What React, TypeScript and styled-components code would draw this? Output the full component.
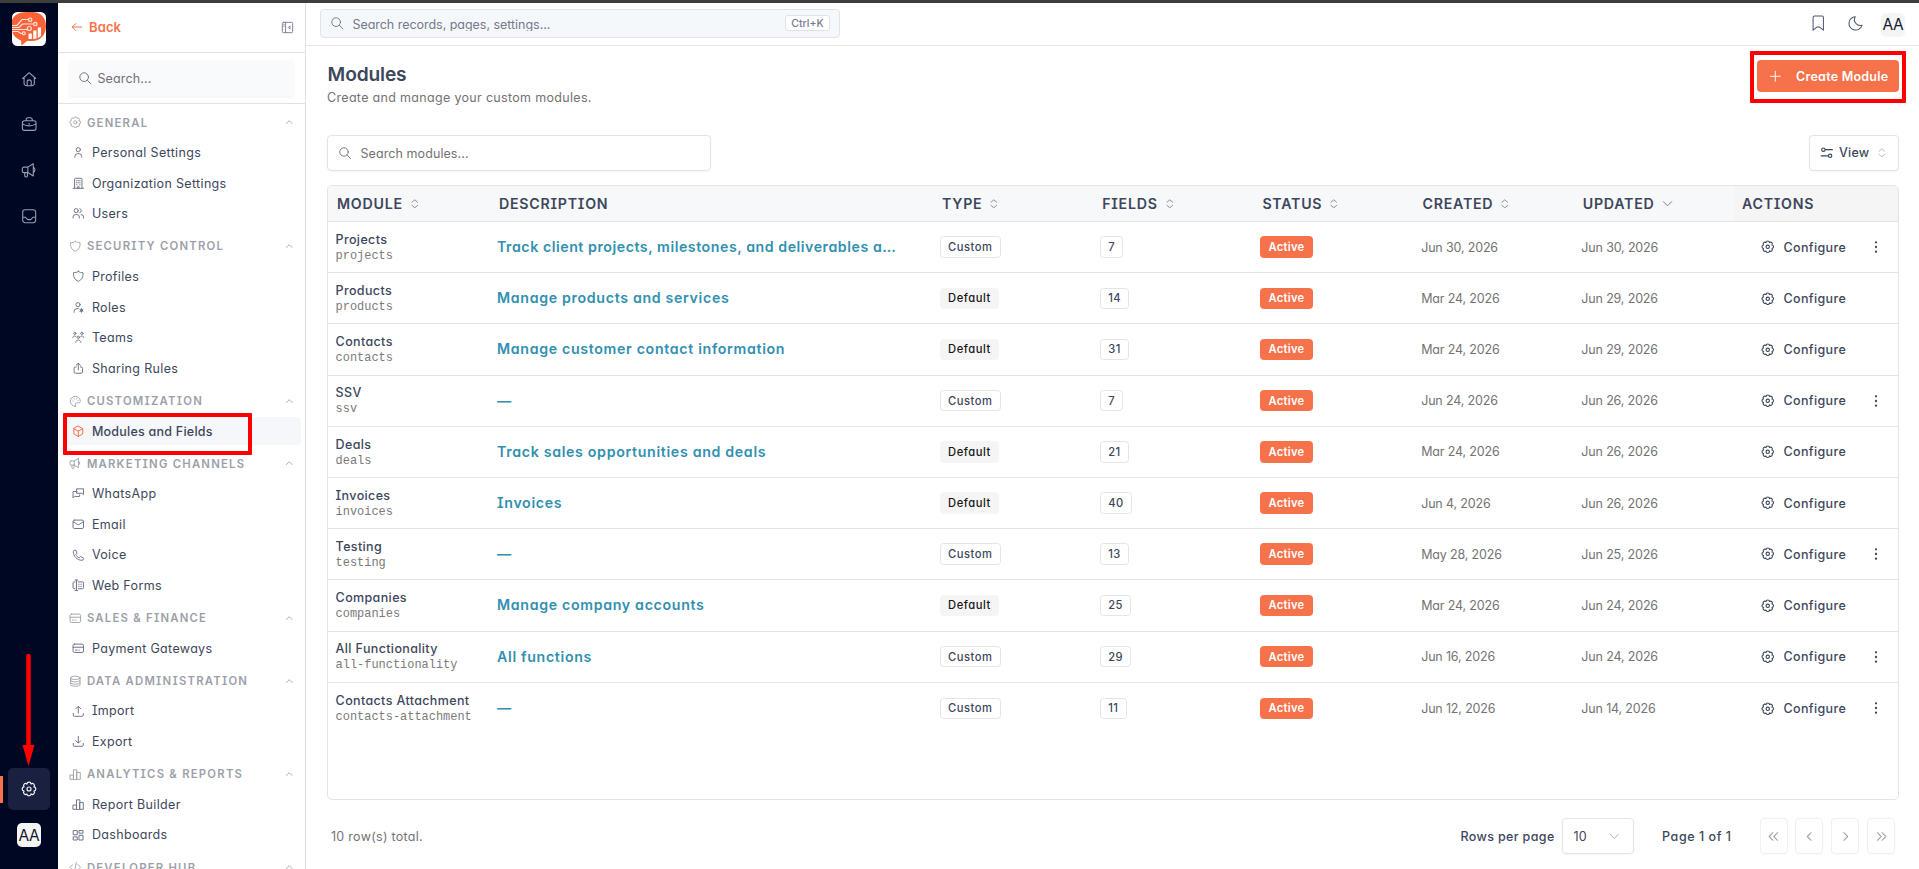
import React from 'react';
import styled, { createGlobalStyle } from 'styled-components';

const GlobalStyle = createGlobalStyle`
  * { box-sizing: border-box; }
  body {
    margin: 0;
    background: #fff;
    color: #3d475c;
    font-family: Inter, "Noto Sans", sans-serif;
    font-feature-settings: "cv11", "cv08";
    font-size: 12.5px;
    overflow: hidden;
  }
  button, input { font: inherit; font-feature-settings: inherit; color: inherit; letter-spacing: inherit; }
`;

/* ---------- icons ---------- */

const lobes = (count: number, radius: number, bulge: number) => {
  const pts = Array.from({ length: count }, (_, i) => {
    const a = ((i + 0.5) / count) * Math.PI * 2;
    return `${(12 + radius * Math.cos(a)).toFixed(2)} ${(12 + radius * Math.sin(a)).toFixed(2)}`;
  });
  return `M${pts[count - 1]}` + pts.map((p) => `A${bulge} ${bulge} 0 0 1 ${p}`).join('') + 'z';
};

const icons: Record<string, string> = {
  home: 'M2.5 11 12 2.5 21.5 11M4.5 9.5V18a3.5 3.5 0 0 0 3.5 3.5h8a3.5 3.5 0 0 0 3.5-3.5V9.5M9 21.5V16a3 3 0 0 1 6 0v5.5',
  briefcase: 'M5 7h14a3 3 0 0 1 3 3v8a3 3 0 0 1-3 3H5a3 3 0 0 1-3-3v-8a3 3 0 0 1 3-3zM7.5 7V5.5a3 3 0 0 1 3-3h3a3 3 0 0 1 3 3V7M2 11.5c3 2 6.5 3 10 3s7-1 10-3M11.5 11.5h1',
  megaphone: 'M4 7.5h6v8H4a2 2 0 0 1-2-2v-4a2 2 0 0 1 2-2zM10 7.5l8-5v18l-8-5M18 7.5a4.5 4.5 0 0 1 0 8M5.5 15.5V20a2 2 0 0 0 4 0v-4.5',
  inbox: 'M6 2.5h12A3.5 3.5 0 0 1 21.5 6v12a3.5 3.5 0 0 1-3.5 3.5H6A3.5 3.5 0 0 1 2.5 18V6A3.5 3.5 0 0 1 6 2.5zM2.5 13.5h4c1 0 1.5 3.5 3.5 3.5h4c2 0 2.5-3.5 3.5-3.5h4',
  gear: lobes(8, 8.1, 3.12) + 'M15 12a3 3 0 1 1-6 0 3 3 0 0 1 6 0z',
  user: 'M16 7a4 4 0 1 1-8 0 4 4 0 0 1 8 0zM5.5 21.5V20a5.5 5.5 0 0 1 5.5-5.5h2a5.5 5.5 0 0 1 5.5 5.5v1.5',
  users: 'M12 7a4 4 0 1 1-8 0 4 4 0 0 1 8 0zM2 21v-2a4.5 4.5 0 0 1 4.5-4.5h3A4.5 4.5 0 0 1 14 19v2M15 3.2a4 4 0 0 1 0 7.6M17.5 14.5A4.5 4.5 0 0 1 22 19v2',
  building: 'M5 21.5V4a1.5 1.5 0 0 1 1.5-1.5h11A1.5 1.5 0 0 1 19 4v17.5M2 21.5h20M8.5 7h1M14.5 7h1M8.5 11h1M14.5 11h1M8.5 15h1M14.5 15h1M10.5 21.5v-3h3v3M11.8 7h.5M11.8 11h.5',
  shield: 'M12 2.5c2.5 2 5.5 2.7 9 2.5.8 8-2 13.5-9 16.5C5 18.5 2.2 13 3 5c3.5.2 6.5-.5 9-2.5z',
  role: 'M15.5 7a4 4 0 1 1-8 0 4 4 0 0 1 8 0zM4 21.5V20a5.5 5.5 0 0 1 5.5-5.5H12M18 14.5v7M15 16.2l6 3.5M15 19.7l6-3.5M20 18a2 2 0 1 1-4 0 2 2 0 0 1 4 0z',
  team: 'M7.5 4.5a2.2 2.2 0 1 1-4.4 0 2.2 2.2 0 0 1 4.4 0zM20.9 4.5a2.2 2.2 0 1 1-4.4 0 2.2 2.2 0 0 1 4.4 0zM14.2 12a2.2 2.2 0 1 1-4.4 0 2.2 2.2 0 0 1 4.4 0zM1.5 12.5C1.5 8.8 7 8.5 8 11M22.5 12.5C22.5 8.8 17 8.5 16 11M7 21.5c0-6 10-6 10 0',
  share: 'M12 15V2.5M8 6l4-3.5L16 6M8 9.5H6.5A2.5 2.5 0 0 0 4 12v7a2.5 2.5 0 0 0 2.5 2.5h11A2.5 2.5 0 0 0 20 19v-7a2.5 2.5 0 0 0-2.5-2.5H16',
  palette: 'M12 21.5A9.5 9.5 0 1 1 21.5 12c0 2.5-2 3-4 3h-3c-2 0-3 1.5-2 3.5.7 1.5.5 3-.5 3zM7 11.5h.5M10 7.5h.5M14.5 7.5h.5M17 11h.5',
  cube: 'M12 2.2l8.5 4.7v10.2L12 21.8l-8.5-4.7V6.9zM3.5 7 12 11.8 20.5 7M12 11.8v10',
  chats: 'M9.5 3.5H22v11l-3-2.5H9.5zM9.5 8.5H2V21l3-3h9.5v-3',
  mail: 'M4.5 4h15A2.5 2.5 0 0 1 22 6.5v11a2.5 2.5 0 0 1-2.5 2.5h-15A2.5 2.5 0 0 1 2 17.5v-11A2.5 2.5 0 0 1 4.5 4zM2.5 7l7.3 5a4 4 0 0 0 4.4 0l7.3-5',
  phone: 'M7.2 2.5 9.5 8 7.3 10.3c1.3 3 3.3 5 6.4 6.4L16 14.5l5.5 2.3V19a2.5 2.5 0 0 1-2.5 2.5C10 21.5 2.5 14 2.5 5A2.5 2.5 0 0 1 5 2.5z',
  form: 'M8.5 2v20M6 2h5M6 22h5M5.5 5.5H4a2 2 0 0 0-2 2v9a2 2 0 0 0 2 2h1.5M12 5.5h8a2 2 0 0 1 2 2v9a2 2 0 0 1-2 2h-8M12.5 10h1M17 10h1M12.5 14h1M17 14h1',
  card: 'M5 4h14a3 3 0 0 1 3 3v10a3 3 0 0 1-3 3H5a3 3 0 0 1-3-3V7a3 3 0 0 1 3-3zM2 10h20M6.5 15.5h3M13 15.5h1',
  database: 'M21 5.5c0 1.9-4 3-9 3s-9-1.1-9-3 4-3.2 9-3.2 9 1.3 9 3.2zM3 5.5v13c0 1.9 4 3 9 3s9-1.1 9-3v-13M3 10c0 1.9 4 3 9 3s9-1.1 9-3M3 14.5c0 1.9 4 3 9 3s9-1.1 9-3',
  upload: 'M12 15.5V3M7.5 7 12 2.5 16.5 7M2.5 16v3a2.5 2.5 0 0 0 2.5 2.5h14a2.5 2.5 0 0 0 2.5-2.5v-3',
  download: 'M12 2.5V15M7.5 11l4.5 4.5 4.5-4.5M2.5 16v3a2.5 2.5 0 0 0 2.5 2.5h14a2.5 2.5 0 0 0 2.5-2.5v-3',
  bars: 'M2.5 13.5h6v8h-6zM8.5 21.5v-18H15v18zM15 8.5h6.5v13H15z',
  grid: 'M3 3h7v8H3zM14 3h7v5h-7zM14 12h7v9h-7zM3 15h7v6H3z',
  code: 'M7 7l-5 5 5 5M17 7l5 5-5 5M14 3l-4 18',
  search: 'M17.5 10.25a7.25 7.25 0 1 1-14.5 0 7.25 7.25 0 0 1 14.5 0zM15.7 15.7 21.5 21.5',
  back: 'M2.5 12h19M9.5 5l-7 7 7 7',
  panel: 'M4.5 2.5h15a2 2 0 0 1 2 2v15a2 2 0 0 1-2 2h-15a2 2 0 0 1-2-2v-15a2 2 0 0 1 2-2zM8.5 2.5v19M5 6h1M5 9.5h1M16 9.5 13.5 12l2.5 2.5z',
  up: 'M4 15.5l8-8 8 8',
  down: 'M3 8l9 9 9-9',
  left: 'M15 5l-7 7 7 7',
  right: 'M9 5l7 7-7 7',
  first: 'M11 5l-7 7 7 7M19.5 5l-7 7 7 7',
  last: 'M4.5 5l7 7-7 7M13 5l7 7-7 7',
  sort: 'M5 8l7-6 7 6M5 16l7 6 7-6',
  bookmark: 'M6.5 1.5h11A2 2 0 0 1 19.5 3.5V22L14 17.5h-4L4.5 22V3.5a2 2 0 0 1 2-2z',
  moon: 'M12 2.5A9.7 9.7 0 1 0 21.8 15 8.6 8.6 0 0 1 12 2.5z',
  plus: 'M12 2.5v19M2.5 12h19',
  sliders: 'M9 6.5a3 3 0 1 1-6 0 3 3 0 0 1 6 0zM9 6.5h13M21 17.5a3 3 0 1 1-6 0 3 3 0 0 1 6 0zM15 17.5H2',
};

const Glyph = styled.svg<{ $size: number }>`
  width: ${(p) => p.$size}px;
  height: ${(p) => p.$size}px;
  flex: none;
  display: block;
  fill: none;
  stroke: currentColor;
  stroke-linecap: round;
  stroke-linejoin: round;
`;

const Icon = ({ name, size = 12.6, weight = 1.6 }: { name: string; size?: number; weight?: number }) => (
  <Glyph viewBox="0 0 24 24" $size={size} strokeWidth={weight}>
    <path d={icons[name]} />
  </Glyph>
);

const Logo = () => (
  <svg width="34" height="34" viewBox="0 0 34 34">
    <rect width="34" height="34" rx="5.5" fill="#fff" />
    <path
      d="M0 8C2 3 7 0 15 0h5C29 0 34 6 34 14c0 9-6 15-14 15h-5l-5.5 4.5L9 28.5C3 26 0 22 0 17z"
      fill="#fb6237"
    />
    <g fill="none" stroke="#fff" strokeOpacity="0.85" strokeWidth="1.2">
      <path d="M0 13.5h5l5-6h6M0 15.5h7l3.5-3.5h11M0 17.5h15M0 19.5h6l3 2h1" />
      <circle cx="18.2" cy="7.7" r="1.7" fill="#fb6237" />
      <circle cx="23.3" cy="12" r="1.7" fill="#fb6237" />
      <circle cx="17.3" cy="16.5" r="2" fill="#fb6237" />
      <circle cx="11.8" cy="21.3" r="1.5" fill="#fb6237" />
    </g>
    <path d="M16.5 21.5h3.3V27h-3.3zM21.2 18.5h3.3v8l-3.3.5zM25.8 15.5H29V24l-3.2 2z" fill="#fff" />
  </svg>
);

/* ---------- shell ---------- */

const Page = styled.div`
  position: relative;
  width: 100%;
  height: 869px;
  display: flex;
  border-top: 3px solid #3d3d3d;
  overflow: hidden;
`;

const Rail = styled.nav`
  width: 58px;
  flex: none;
  background: #000722;
  display: flex;
  flex-direction: column;
  align-items: center;
  padding: 9px 0 22px;
`;

const RailItems = styled.div`
  display: flex;
  flex-direction: column;
  gap: 3.6px;
  margin-top: 12px;
  flex: 1;
`;

const RailButton = styled.div<{ $active?: boolean }>`
  width: 42px;
  height: 42px;
  border-radius: 5px;
  display: flex;
  align-items: center;
  justify-content: center;
  color: ${(p) => (p.$active ? '#f3f4f8' : '#989db0')};
  background: ${(p) => (p.$active ? '#1a2140' : 'transparent')};
`;

const RailActive = styled.div`
  width: 58px;
  display: flex;
  align-items: center;
  justify-content: center;
  background: linear-gradient(#f5724b, #f5724b) 0 8px / 3px 27px no-repeat;
`;

const Avatar = styled.div`
  width: 24px;
  height: 24px;
  border-radius: 5px;
  background: #f5f5f5;
  color: #14182a;
  font-size: 15.5px;
  letter-spacing: -0.2px;
  display: flex;
  align-items: center;
  justify-content: center;
`;

const TopAvatar = styled(Avatar)`
  position: relative;
  top: 1px;
`;

const RailAvatar = styled(Avatar)`
  margin-top: 13px;
`;

const Sidebar = styled.aside`
  width: 248px;
  flex: none;
  border-right: 1px solid #e0e1e8;
  display: flex;
  flex-direction: column;
  overflow: hidden;
`;

const SidebarTop = styled.div`
  height: 50px;
  flex: none;
  display: flex;
  align-items: center;
  justify-content: space-between;
  padding: 0 11.5px 1px 12.5px;
  border-bottom: 1px solid #e0e1e8;
  color: #7b8194;
`;

const BackLink = styled.div`
  display: flex;
  align-items: center;
  gap: 6.5px;
  color: #f5724b;
  font-size: 13px;
  font-weight: 600;
  letter-spacing: 0.1px;
`;

const SidebarSearchArea = styled.div`
  height: 51px;
  flex: none;
  padding: 7px 10px 0 10px;
  border-bottom: 1px solid #e0e1e8;
`;

const SidebarSearch = styled.div`
  height: 37px;
  border-radius: 5px;
  background: #f9fafc;
  box-shadow: 0 1px 1px rgba(0, 0, 0, 0.03);
  display: flex;
  align-items: center;
  gap: 5px;
  padding-left: 10px;
  color: #6f7178;
  letter-spacing: 0.15px;
`;

const Nav = styled.div`
  padding: 4px 4px 0 8px;
`;

const Section = styled.section`
  display: flex;
  flex-direction: column;
  margin-bottom: 3.8px;
`;

const SectionHeader = styled.div`
  height: 28px;
  margin-bottom: 2px;
  display: flex;
  align-items: center;
  gap: 5.3px;
  padding: 1px 8px 0 3px;
  color: #9c9fa9;
  font-size: 11.3px;
  font-weight: 600;
  letter-spacing: 1.24px;
  white-space: nowrap;

  & > :last-child {
    margin-left: auto;
  }
`;

const NavList = styled.div`
  display: flex;
  flex-direction: column;
  gap: 1.9px;
`;

const NavItem = styled.div<{ $active?: boolean }>`
  height: 28.8px;
  display: flex;
  align-items: center;
  gap: 7.6px;
  padding-left: 5.7px;
  border-radius: 4px;
  color: #3d475c;
  background: ${(p) => (p.$active ? '#f5f7fa' : 'transparent')};
  font-weight: ${(p) => (p.$active ? 500 : 400)};
  letter-spacing: ${(p) => (p.$active ? 0.24 : 0.34)}px;

  svg {
    color: ${(p) => (p.$active ? '#f5724b' : '#70778a')};
  }
`;

const NAV = [
  { title: 'GENERAL', icon: 'gear', items: [['user', 'Personal Settings'], ['building', 'Organization Settings'], ['users', 'Users']] },
  { title: 'SECURITY CONTROL', icon: 'shield', items: [['shield', 'Profiles'], ['role', 'Roles'], ['team', 'Teams'], ['share', 'Sharing Rules']] },
  { title: 'CUSTOMIZATION', icon: 'palette', items: [['cube', 'Modules and Fields']] },
  { title: 'MARKETING CHANNELS', icon: 'megaphone', items: [['chats', 'WhatsApp'], ['mail', 'Email'], ['phone', 'Voice'], ['form', 'Web Forms']] },
  { title: 'SALES & FINANCE', icon: 'card', items: [['card', 'Payment Gateways']] },
  { title: 'DATA ADMINISTRATION', icon: 'database', items: [['upload', 'Import'], ['download', 'Export']] },
  { title: 'ANALYTICS & REPORTS', icon: 'bars', items: [['bars', 'Report Builder'], ['grid', 'Dashboards']] },
  { title: 'DEVELOPER HUB', icon: 'code', items: [] },
];

/* ---------- main ---------- */

const Main = styled.main`
  flex: 1;
  min-width: 0;
  display: flex;
  flex-direction: column;
`;

const TopBar = styled.header`
  height: 43px;
  flex: none;
  display: flex;
  align-items: center;
  justify-content: space-between;
  padding: 0 14px 1px 14px;
  border-bottom: 1px solid #e4e4e8;
`;

const GlobalSearch = styled.div`
  width: 520px;
  height: 29px;
  margin-top: -1px;
  border: 1px solid #dfe3ea;
  border-radius: 4px;
  background: #f5f8fb;
  display: flex;
  align-items: center;
  padding: 0 9px;
  gap: 8px;
  color: #747a8c;
`;

const SearchHint = styled.span`
  flex: 1;
  height: 15px;
  line-height: 18px;
  overflow: hidden;
  letter-spacing: -0.03px;
`;

const Shortcut = styled.kbd`
  height: 16px;
  width: 45px;
  border: 1px solid #dfe3ea;
  border-radius: 3px;
  background: #fff;
  display: flex;
  align-items: center;
  justify-content: center;
  font-family: inherit;
  font-size: 10.5px;
  font-weight: 500;
`;

const TopActions = styled.div`
  display: flex;
  align-items: center;
  color: #4d566b;
  gap: 20.5px;

  & > :last-child {
    margin-left: -3px;
  }
`;

const Content = styled.div`
  flex: 1;
  display: flex;
  flex-direction: column;
  padding: 14px 20px 0 21px;
`;

const TitleRow = styled.div`
  display: flex;
  justify-content: space-between;
  align-items: flex-start;
  height: 75px;
`;

const TitleBlock = styled.div`
  padding-top: 1px;
`;

const Title = styled.h1`
  margin: 0 0 0 0.6px;
  font-size: 19.2px;
  line-height: 26px;
  font-weight: 600;
  letter-spacing: -0.16px;
`;

const Subtitle = styled.p`
  margin: 2px 0 0;
  line-height: 18px;
  color: #737373;
  letter-spacing: 0.32px;
`;

const CreateButton = styled.button`
  width: 142px;
  height: 32px;
  border: 0;
  border-radius: 4px;
  background: #f5724b;
  color: #fff;
  display: flex;
  align-items: center;
  gap: 14.5px;
  padding: 0 0 0 12px;
  font-weight: 600;
  letter-spacing: 0.24px;
  white-space: nowrap;
`;

const Toolbar = styled.div`
  display: flex;
  justify-content: space-between;
  height: 36px;
`;

const ModuleSearch = styled.div`
  width: 384px;
  border: 1px solid #e4e4e6;
  border-radius: 4px;
  box-shadow: 0 1px 2px rgba(0, 0, 0, 0.04);
  display: flex;
  align-items: center;
  gap: 8.5px;
  padding-left: 10px;
  color: #737373;
  letter-spacing: 0.08px;
`;

const ViewButton = styled.button`
  width: 90px;
  border: 1px solid #e4e4e6;
  border-radius: 4px;
  background: #fff;
  box-shadow: 0 1px 2px rgba(0, 0, 0, 0.04);
  display: flex;
  align-items: center;
  padding: 0 11px 1px 10px;
  gap: 5.5px;
  font-weight: 500;
  letter-spacing: 0.2px;

  & > :last-child {
    margin-left: auto;
    color: #a4a7af;
  }
`;

const columns = '162px 443px repeat(5, 160.2px) 1fr';

const Table = styled.div`
  height: 615px;
  margin-top: 14px;
  border: 1px solid #e4e4e6;
  border-radius: 5px;
  overflow: hidden;
`;

const HeadRow = styled.div`
  display: grid;
  grid-template-columns: ${columns};
  height: 36px;
  border-bottom: 1px solid #e4e4e6;
  background: #f7f8fa;
  font-size: 14.2px;
  font-weight: 600;
  letter-spacing: 0.74px;
`;

const HeadCell = styled.div<{ $plain?: boolean }>`
  display: flex;
  align-items: center;
  gap: 7px;
  padding-left: ${(p) => (p.$plain ? 8 : 9)}px;
  background: ${(p) => (p.$plain ? '#f5f5f5' : 'transparent')};

  svg {
    color: #73767e;
  }
`;

const Row = styled.div`
  display: grid;
  grid-template-columns: ${columns};
  height: 51.2px;
  border-bottom: 1px solid #e4e4e6;

  &:last-child {
    border-bottom: 0;
  }
`;

const Cell = styled.div`
  display: flex;
  align-items: center;
  padding-left: 7px;
  white-space: nowrap;
`;

const ModuleCell = styled(Cell)`
  flex-direction: column;
  align-items: flex-start;
  justify-content: center;
  padding: 1.5px 0 0 7.6px;
`;

const ModuleName = styled.div`
  line-height: 17px;
  font-weight: 500;
  letter-spacing: 0.37px;
`;

const ModuleKey = styled.div`
  line-height: 17px;
  color: #7a7a7a;
  font-family: "Liberation Mono", monospace;
  font-size: 11.95px;
`;

const Description = styled(Cell)<{ $tight: boolean }>`
  padding-bottom: 1px;
  color: #3190b0;
  font-size: 14.2px;
  font-weight: 600;
  letter-spacing: ${(p) => (p.$tight ? 0.54 : 0.67)}px;
`;

const Badge = styled.span<{ $kind: 'outline' | 'muted' | 'solid' }>`
  height: 21.5px;
  display: inline-flex;
  align-items: center;
  padding: 0 7px;
  border: 1px solid
    ${(p) => (p.$kind === 'outline' ? '#e4e4e6' : p.$kind === 'muted' ? '#f5f5f5' : '#f5724b')};
  border-radius: 3.5px;
  background: ${(p) => (p.$kind === 'outline' ? '#fff' : p.$kind === 'muted' ? '#f5f5f5' : '#f5724b')};
  color: ${(p) => (p.$kind === 'outline' ? '#3d475c' : p.$kind === 'muted' ? '#171717' : '#fff')};
  font-size: 11.2px;
  font-weight: ${(p) => (p.$kind === 'solid' ? 600 : 500)};
  letter-spacing: ${(p) => (p.$kind === 'solid' ? 0.3 : p.$kind === 'muted' ? 0.56 : 0.53)}px;
`;

const DateCell = styled(Cell)`
  padding-left: 7.6px;
  color: #737373;
  letter-spacing: -0.16px;
`;

const ActionCell = styled(Cell)`
  padding: 0 15px 0 27.3px;
  justify-content: space-between;
`;

const Configure = styled.div`
  display: flex;
  align-items: center;
  gap: 8.8px;
  font-weight: 500;
  letter-spacing: 0.36px;
`;

const Dots = () => (
  <svg width="14" height="14" viewBox="0 0 14 14" fill="#3d475c">
    <circle cx="7" cy="2.3" r="1.15" />
    <circle cx="7" cy="7" r="1.15" />
    <circle cx="7" cy="11.7" r="1.15" />
  </svg>
);

const Footer = styled.footer`
  display: flex;
  align-items: center;
  height: 36px;
  margin-top: 18px;
  padding: 0 4px;
  font-weight: 500;
`;

const Total = styled.span`
  flex: 1;
  font-weight: 400;
  color: #737373;
  letter-spacing: 0.28px;
`;

const FooterLabel = styled.span`
  letter-spacing: 0.36px;
`;

const PageSize = styled.div`
  width: 72px;
  height: 36px;
  margin: 0 28.5px 0 7px;
  border: 1px solid #e4e4e6;
  border-radius: 4px;
  box-shadow: 0 1px 2px rgba(0, 0, 0, 0.04);
  display: flex;
  align-items: center;
  justify-content: space-between;
  padding: 0 13px 0 11px;
  font-weight: 400;

  svg {
    color: #a4a7af;
  }
`;

const PageLabel = styled.span`
  width: 97.5px;
  letter-spacing: 0.55px;
`;

const Pager = styled.div`
  display: flex;
  gap: 7.8px;
`;

const PagerButton = styled.div`
  width: 28px;
  height: 36px;
  border: 1px solid #f0f0f2;
  border-radius: 4px;
  box-shadow: 0 1px 2px rgba(0, 0, 0, 0.02);
  display: flex;
  align-items: center;
  justify-content: center;
  color: #a0a4ae;
`;

const HEADS: [string, string?][] = [
  ['MODULE', 'sort'], ['DESCRIPTION'], ['TYPE', 'sort'], ['FIELDS', 'sort'],
  ['STATUS', 'sort'], ['CREATED', 'sort'], ['UPDATED', 'down'], ['ACTIONS'],
];

const ROWS: [string, string, string, 'Custom' | 'Default', number, string, string][] = [
  ['Projects', 'projects', 'Track client projects, milestones, and deliverables a…', 'Custom', 7, 'Jun 30, 2026', 'Jun 30, 2026'],
  ['Products', 'products', 'Manage products and services', 'Default', 14, 'Mar 24, 2026', 'Jun 29, 2026'],
  ['Contacts', 'contacts', 'Manage customer contact information', 'Default', 31, 'Mar 24, 2026', 'Jun 29, 2026'],
  ['SSV', 'ssv', '—', 'Custom', 7, 'Jun 24, 2026', 'Jun 26, 2026'],
  ['Deals', 'deals', 'Track sales opportunities and deals', 'Default', 21, 'Mar 24, 2026', 'Jun 26, 2026'],
  ['Invoices', 'invoices', 'Invoices', 'Default', 40, 'Jun 4, 2026', 'Jun 26, 2026'],
  ['Testing', 'testing', '—', 'Custom', 13, 'May 28, 2026', 'Jun 25, 2026'],
  ['Companies', 'companies', 'Manage company accounts', 'Default', 25, 'Mar 24, 2026', 'Jun 24, 2026'],
  ['All Functionality', 'all-functionality', 'All functions', 'Custom', 29, 'Jun 16, 2026', 'Jun 24, 2026'],
  ['Contacts Attachment', 'contacts-attachment', '—', 'Custom', 11, 'Jun 12, 2026', 'Jun 14, 2026'],
];

/* ---------- annotations drawn over the page ---------- */

const Highlight = styled.div<{ $x: number; $y: number; $w: number; $h: number }>`
  position: absolute;
  left: ${(p) => p.$x}px;
  top: ${(p) => p.$y}px;
  width: ${(p) => p.$w}px;
  height: ${(p) => p.$h}px;
  border: 4px solid #fe0000;
  border-radius: 1px;
`;

const Pointer = styled.svg`
  position: absolute;
  left: 20px;
  top: 650px;
`;

export default function App() {
  return (
    <>
      <GlobalStyle />
      <Page>
        <Rail>
          <Logo />
          <RailItems>
            {['home', 'briefcase', 'megaphone', 'inbox'].map((n) => (
              <RailButton key={n}>
                <Icon name={n} size={16.4} weight={1.6} />
              </RailButton>
            ))}
          </RailItems>
          <RailActive>
            <RailButton $active>
              <Icon name="gear" size={16} weight={1.8} />
            </RailButton>
          </RailActive>
          <RailAvatar>AA</RailAvatar>
        </Rail>

        <Sidebar>
          <SidebarTop>
            <BackLink>
              <Icon name="back" size={12} weight={2} />
              Back
            </BackLink>
            <Icon name="panel" size={13} weight={1.8} />
          </SidebarTop>
          <SidebarSearchArea>
            <SidebarSearch>
              <Icon name="search" size={14.4} weight={1.6} />
              Search...
            </SidebarSearch>
          </SidebarSearchArea>
          <Nav>
            {NAV.map((s) => (
              <Section key={s.title}>
                <SectionHeader>
                  <Icon name={s.icon} weight={1.7} />
                  {s.title}
                  <Icon name="up" size={8.5} weight={2.4} />
                </SectionHeader>
                <NavList>
                  {s.items.map(([icon, label]) => (
                    <NavItem key={label} $active={label === 'Modules and Fields'}>
                      <Icon name={icon} weight={1.9} />
                      {label}
                    </NavItem>
                  ))}
                </NavList>
              </Section>
            ))}
          </Nav>
        </Sidebar>

        <Main>
          <TopBar>
            <GlobalSearch>
              <Icon name="search" size={14.4} />
              <SearchHint>Search records, pages, settings...</SearchHint>
              <Shortcut>Ctrl+K</Shortcut>
            </GlobalSearch>
            <TopActions>
              <Icon name="bookmark" size={16.5} weight={1.5} />
              <Icon name="moon" size={16.5} weight={1.5} />
              <TopAvatar>AA</TopAvatar>
            </TopActions>
          </TopBar>

          <Content>
            <TitleRow>
              <TitleBlock>
                <Title>Modules</Title>
                <Subtitle>Create and manage your custom modules.</Subtitle>
              </TitleBlock>
              <CreateButton>
                <Icon name="plus" weight={1.8} />
                Create Module
              </CreateButton>
            </TitleRow>

            <Toolbar>
              <ModuleSearch>
                <Icon name="search" size={14} />
                Search modules...
              </ModuleSearch>
              <ViewButton>
                <Icon name="sliders" size={13.5} weight={2} />
                View
                <Icon name="sort" size={9.6} weight={2} />
              </ViewButton>
            </Toolbar>

            <Table>
              <HeadRow>
                {HEADS.map(([label, icon]) => (
                  <HeadCell key={label} $plain={label === 'ACTIONS'}>
                    {label}
                    {icon && <Icon name={icon} size={icon === 'sort' ? 9.6 : 11} weight={2} />}
                  </HeadCell>
                ))}
              </HeadRow>
              {ROWS.map(([name, key, description, type, fields, created, updated]) => (
                <Row key={key}>
                  <ModuleCell>
                    <ModuleName>{name}</ModuleName>
                    <ModuleKey>{key}</ModuleKey>
                  </ModuleCell>
                  <Description $tight={description.endsWith('…')}>{description}</Description>
                  <Cell>
                    <Badge $kind={type === 'Custom' ? 'outline' : 'muted'}>{type}</Badge>
                  </Cell>
                  <Cell>
                    <Badge $kind="outline">{fields}</Badge>
                  </Cell>
                  <Cell>
                    <Badge $kind="solid">Active</Badge>
                  </Cell>
                  <DateCell>{created}</DateCell>
                  <DateCell>{updated}</DateCell>
                  <ActionCell>
                    <Configure>
                      <Icon name="gear" size={13.5} weight={2} />
                      Configure
                    </Configure>
                    {type === 'Custom' && <Dots />}
                  </ActionCell>
                </Row>
              ))}
            </Table>

            <Footer>
              <Total>10 row(s) total.</Total>
              <FooterLabel>Rows per page</FooterLabel>
              <PageSize>
                10
                <Icon name="down" size={10.5} weight={2.2} />
              </PageSize>
              <PageLabel>Page 1 of 1</PageLabel>
              <Pager>
                {['first', 'left', 'right', 'last'].map((n) => (
                  <PagerButton key={n}>
                    <Icon name={n} size={13} weight={2} />
                  </PagerButton>
                ))}
              </Pager>
            </Footer>
          </Content>
        </Main>

        <Highlight $x={63} $y={409.5} $w={189} $h={42} />
        <Highlight $x={1750} $y={48} $w={156} $h={52} />
        <Pointer width="18" height="118" viewBox="0 0 18 118">
          <path d="M8.5 3v92" stroke="#fe0000" strokeWidth="4.5" strokeLinecap="round" />
          <path d="M2.5 92h12L8.5 113z" fill="#fe0000" />
        </Pointer>
      </Page>
    </>
  );
}
